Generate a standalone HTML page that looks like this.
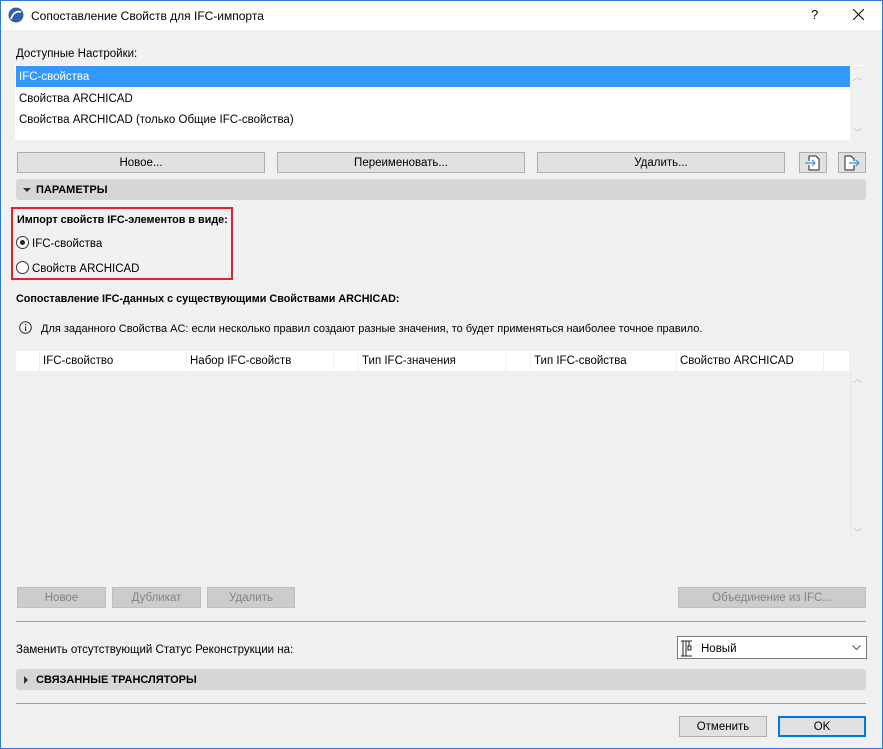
<!DOCTYPE html>
<html><head><meta charset="utf-8"><style>
*{box-sizing:border-box;margin:0;padding:0}
body{width:883px;height:749px;overflow:hidden;font-family:"Liberation Sans",sans-serif;font-size:11.5px;color:#000;background:#f0f0f0;position:relative}
.win{position:absolute;left:0;top:0;width:883px;height:749px;background:#f0f0f0}
.brd{position:absolute;left:0;top:0;width:883px;height:749px;border:1px solid #2b79d8;pointer-events:none}
.a{position:absolute;white-space:nowrap}
.t{margin-top:2px}
.title{position:absolute;left:0;top:0;width:883px;height:30px;background:#fff}
.btn{position:absolute;height:21px;border:1px solid #adadad;background:#e1e1e1;text-align:center;line-height:20px}
.dis{color:#838383;background:#cccccc;border-color:#bfbfbf}
.bar{position:absolute;left:16px;width:850px;height:21px;background:#d6d6d6;border-radius:3px;font-weight:bold;font-size:11px;line-height:22px;padding-left:20px}
.tri{position:absolute;left:7px;top:9px;width:0;height:0}
.hr{position:absolute;left:16px;width:850px;height:1px;background:#a0a0a0}
.col{position:absolute;top:351px;height:20px;background:#fff;line-height:21px;padding-left:3px}
.radio{position:absolute;width:13px;height:13px;border:1px solid #333;border-radius:50%;background:#fff}
.b{font-weight:bold;font-size:10.8px}
</style></head><body><div class="win">
<div class="title">
<svg class="a" style="left:8px;top:7px" width="16" height="16" viewBox="0 0 16 16"><circle cx="8" cy="8" r="7.5" fill="#2f5fa8"/><path d="M3 12 Q6 3 13 5" stroke="#fff" stroke-width="1.8" fill="none"/></svg>
<div class="a" style="left:31px;top:9px;font-size:12px">Сопоставление Свойств для IFC-импорта</div>
<div class="a" style="left:811px;top:7px;font-size:13px">?</div>
<svg class="a" style="left:853px;top:9px" width="11" height="11"><path d="M0 0L11 11M11 0L0 11" stroke="#000" stroke-width="1"/></svg>
</div>
<div class="a t" style="left:16px;top:46px">Доступные Настройки:</div>
<div class="a" style="left:15px;top:65px;width:851px;height:75px;background:#fff"></div>
<div class="a" style="left:16px;top:66px;width:834px;height:21px;background:#3399ff;color:#fff;line-height:22px;padding-left:3px">IFC-свойства</div>
<div class="a t" style="left:19px;top:91px">Свойства ARCHICAD</div>
<div class="a t" style="left:19px;top:112px">Свойства ARCHICAD (только Общие IFC-свойства)</div>
<div class="a" style="left:850px;top:66px;width:16px;height:74px;background:#f0f0f0"></div>
<div class="a" style="left:853px;top:70px;color:#bbb;font-size:9px">︿</div>
<div class="a" style="left:853px;top:126px;color:#bbb;font-size:9px">﹀</div>
<div class="btn" style="left:17px;top:152px;width:248px">Новое...</div>
<div class="btn" style="left:277px;top:152px;width:248px">Переименовать...</div>
<div class="btn" style="left:537px;top:152px;width:248px">Удалить...</div>
<div class="btn" style="left:799px;top:152px;width:28px"><svg style="margin-top:2px" width="18" height="16" viewBox="0 0 18 16"><path d="M5 1H12L15 4V15H5V10M5 6V1" fill="#fff" stroke="#222"/><path d="M1 8H11M8 5L11 8L8 11" stroke="#3b8ff0" fill="none" stroke-width="1.2"/></svg></div>
<div class="btn" style="left:838px;top:152px;width:28px"><svg style="margin-top:2px" width="18" height="16" viewBox="0 0 18 16"><path d="M11 6V4L8 1H2V15H11V10" fill="#fff" stroke="#222"/><path d="M6 8H16M13 5L16 8L13 11" stroke="#3b8ff0" fill="none" stroke-width="1.2"/></svg></div>
<div class="bar" style="top:179px"><span class="tri" style="border-left:4px solid transparent;border-right:4px solid transparent;border-top:4px solid #333"></span>ПАРАМЕТРЫ</div>
<div class="a" style="left:11px;top:207px;width:222px;height:73px;border:2px solid #e4202a"></div>
<div class="a b t" style="left:17px;top:212px">Импорт свойств IFC-элементов в виде:</div>
<div class="radio" style="left:16px;top:236px"><div style="position:absolute;left:3px;top:3px;width:5px;height:5px;border-radius:50%;background:#222"></div></div>
<div class="a t" style="left:32px;top:236px">IFC-свойства</div>
<div class="radio" style="left:16px;top:261px"></div>
<div class="a t" style="left:32px;top:261px">Свойств ARCHICAD</div>
<div class="a b t" style="left:16px;top:291px">Сопоставление IFC-данных с существующими Свойствами ARCHICAD:</div>
<svg class="a" style="left:19px;top:321px" width="13" height="13"><circle cx="6.5" cy="6.5" r="5.8" fill="none" stroke="#333"/><rect x="6" y="5.5" width="1.2" height="4.5" fill="#333"/><rect x="6" y="3" width="1.2" height="1.3" fill="#333"/></svg>
<div class="a t" style="left:41px;top:321px;font-size:11px">Для заданного Свойства AC: если несколько правил создают разные значения, то будет применяться наиболее точное правило.</div>
<div class="col" style="left:16px;width:23px"></div>
<div class="col" style="left:40px;width:146px">IFC-свойство</div>
<div class="col" style="left:187px;width:146px">Набор IFC-свойств</div>
<div class="col" style="left:334px;width:24px"></div>
<div class="col" style="left:359px;width:146px">Тип IFC-значения</div>
<div class="col" style="left:506px;width:24px"></div>
<div class="col" style="left:531px;width:145px">Тип IFC-свойства</div>
<div class="col" style="left:677px;width:146px">Свойство ARCHICAD</div>
<div class="col" style="left:824px;width:25px"></div>
<div class="a" style="left:850px;top:371px;width:1px;height:170px;background:#e6e6e6"></div>
<div class="a" style="left:853px;top:372px;color:#bbb;font-size:9px">︿</div>
<div class="a" style="left:853px;top:526px;color:#bbb;font-size:9px">﹀</div>
<div class="btn dis" style="left:17px;top:587px;width:89px">Новое</div>
<div class="btn dis" style="left:112px;top:587px;width:89px">Дубликат</div>
<div class="btn dis" style="left:207px;top:587px;width:88px">Удалить</div>
<div class="btn dis" style="left:678px;top:587px;width:188px">Объединение из IFC...</div>
<div class="hr" style="top:621px"></div>
<div class="a t" style="left:16px;top:642px">Заменить отсутствующий Статус Реконструкции на:</div>
<div class="a" style="left:677px;top:636px;width:190px;height:23px;background:#fff;border:1px solid #7a7a7a"></div>
<svg class="a" style="left:680px;top:639px" width="18" height="18" viewBox="0 0 18 18"><path d="M1 2H12M3 2V17M6 2V17M1 17H12M9 2V7M8 7H11V11H8Z" stroke="#222" fill="none"/></svg>
<div class="a t" style="left:701px;top:641px">Новый</div>
<svg class="a" style="left:852px;top:645px" width="9" height="6"><path d="M0.5 0.5L4.5 4.5L8.5 0.5" stroke="#555" fill="none"/></svg>
<div class="bar" style="top:669px"><span class="tri" style="left:8px;top:7px;border-top:4px solid transparent;border-bottom:4px solid transparent;border-left:4px solid #333"></span>СВЯЗАННЫЕ ТРАНСЛЯТОРЫ</div>
<div class="hr" style="top:703px"></div>
<div class="btn" style="left:679px;top:716px;width:88px">Отменить</div>
<div class="btn" style="left:778px;top:716px;width:88px;border:2px solid #0078d7;line-height:18px">OK</div>
</div><div class="brd"></div></body></html>
